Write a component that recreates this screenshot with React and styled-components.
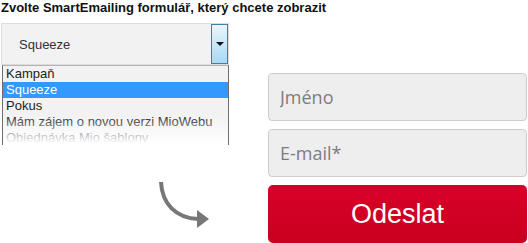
import React from "react";
import styled, { createGlobalStyle } from "styled-components";

const GlobalStyle = createGlobalStyle`
  html, body {
    margin: 0;
    padding: 0;
    background: #fff;
  }
  body {
    font-family: "Liberation Sans", Arial, sans-serif;
    overflow: hidden;
  }
`;

const options = [`Kampaň`, `Squeeze`, `Pokus`, `Mám zájem o novou verzi MioWebu`, `Objednávka Mio šablony`];

const Page = styled.div`
  width: 528px;
  height: 243px;
  overflow: hidden;
`;

const Title = styled.h3`
  margin: 0 0 8px 1px;
  font-size: 13px;
  line-height: 15px;
  font-weight: bold;
  color: #111;
`;

const Row = styled.div`
  display: flex;
  align-items: flex-start;
`;

const LeftCol = styled.div`
  display: flex;
  flex-direction: column;
  width: 228px;
  margin-left: 1px;
`;

const Select = styled.div`
  position: relative;
  display: flex;
  align-items: center;
  box-sizing: border-box;
  height: 42px;
  padding-left: 17px;
  background: #f2f2f2;
  border: 1px solid #dcdcdc;
  font-size: 13px;
  color: #333;
`;

const SelectArrow = styled.div`
  position: absolute;
  top: 0;
  right: 0;
  bottom: 0;
  width: 17px;
  box-sizing: border-box;
  border: 1px solid #3c7fb1;
  background: linear-gradient(#eaf6fd, #a7d9f5);
  display: flex;
  align-items: center;
  justify-content: center;

  &::after {
    content: "";
    border-left: 4px solid transparent;
    border-right: 4px solid transparent;
    border-top: 4px solid #111;
  }
`;

const List = styled.ul`
  position: relative;
  list-style: none;
  margin: 0 0 0 1px;
  padding: 0;
  height: 80px;
  overflow: hidden;
  background: #f2f2f2;
  border: 1px solid #6e6e6e;
  border-top-color: #b4b4b4;
  border-bottom: none;
  box-sizing: border-box;

  &::after {
    content: "";
    position: absolute;
    left: -1px;
    right: -1px;
    bottom: 0;
    height: 30px;
    background: linear-gradient(rgba(255, 255, 255, 0), #fff 95%);
  }
`;

const Option = styled.li`
  height: 16px;
  line-height: 16px;
  padding-left: 3px;
  font-size: 13px;
  white-space: nowrap;
  color: ${(p) => (p.$active ? `#fff` : `#222`)};
  background: ${(p) => (p.$active ? `#3399ff` : `transparent`)};
`;

const Arrow = styled.svg`
  display: block;
  margin: 33px 0 0 155px;
`;

const Form = styled.div`
  display: flex;
  flex-direction: column;
  gap: 8px;
  width: 259px;
  margin-left: 39px;
  padding-top: 50px;
`;

const Input = styled.input`
  box-sizing: border-box;
  height: 48px;
  width: 100%;
  padding: 0 11px;
  border: 1px solid #cdcdcd;
  border-radius: 4px;
  background: #eeeeee;
  font-family: "Open Sans", sans-serif;
  font-size: 18px;
  color: #333;
  outline: none;

  &::placeholder {
    color: #7d7d7d;
  }
`;

const Submit = styled.button`
  height: 58px;
  width: 100%;
  border: none;
  border-radius: 5px;
  background: linear-gradient(#d80029, #c9001f);
  color: #fff;
  font-family: "Liberation Sans", Arial, sans-serif;
  font-size: 27px;
  cursor: pointer;
`;

export default function App() {
  return (
    <Page>
      <GlobalStyle />
      <Title>Zvolte SmartEmailing formulář, který chcete zobrazit</Title>
      <Row>
        <LeftCol>
          <Select>
            Squeeze
            <SelectArrow />
          </Select>
          <List>
            {options.map((o) => (
              <Option key={o} $active={o === `Squeeze`}>
                {o}
              </Option>
            ))}
          </List>
          <Arrow width="56" height="54" viewBox="0 0 56 54">
            <path d="M5 4 C6 26, 20 40, 42 41" fill="none" stroke="#777" strokeWidth="4" />
            <polygon points="41,32 53,41 41,50" fill="#777" />
          </Arrow>
        </LeftCol>
        <Form>
          <Input placeholder="Jméno" />
          <Input placeholder="E-mail*" />
          <Submit>Odeslat</Submit>
        </Form>
      </Row>
    </Page>
  );
}
